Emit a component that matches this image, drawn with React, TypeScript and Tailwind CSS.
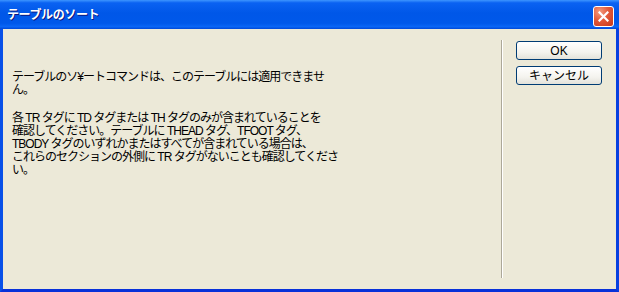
import React from 'react';

const bodyFont = "font-['Liberation_Sans','Noto_Sans_CJK_JP',sans-serif]";

const XpButton = ({ label }: { label: string }) => (
  <button
    type="button"
    className={`h-[19px] w-[86px] rounded-[3px] border border-[#003C74] bg-[linear-gradient(180deg,#FFFFFF_0%,#F4F3EE_60%,#E3E2DA_100%)] text-[12px] leading-none text-black ${bodyFont}`}
  >
    {label}
  </button>
);

const CloseButton = () => (
  <div className="mt-[6px] flex h-[21px] w-[21px] items-center justify-center rounded-[3px] border border-white bg-[radial-gradient(circle_at_30%_25%,#F39B7E_0%,#E2593A_45%,#C7381A_100%)]">
    <svg width="11" height="11" viewBox="0 0 11 11">
      <path d="M1.5 1.5 L9.5 9.5 M9.5 1.5 L1.5 9.5" stroke="#ffffff" strokeWidth="2.2" strokeLinecap="square" />
    </svg>
  </div>
);

export default function App() {
  return (
    <div className="flex h-[292px] w-[619px] flex-col bg-[#0831D9]">
      <div className="flex h-[29px] items-start justify-between bg-[linear-gradient(180deg,#3D95FF_0%,#0A62F2_10%,#0057E8_45%,#0058EA_80%,#0A66F6_92%,#0048D8_100%)] pr-[5px] pl-[7px]">
        <span className="mt-[7px] text-[12px] leading-[14px] font-bold tracking-[-0.4px] text-white [text-shadow:1px_1px_0_#0A1883] font-['Noto_Sans_CJK_JP',sans-serif]">
          テーブルのソート
        </span>
        <CloseButton />
      </div>

      <div className="flex flex-1 border-r-[3px] border-b-[3px] border-l-[3px] border-r-[#0840E0] border-b-[#0831D9] border-l-[#0850E8]">
        <div className="flex flex-1 bg-[#ECE9D8] py-[11px]">
          <div className={`w-[498px] pt-[31px] pl-[9px] text-[12px] leading-[13px] tracking-[-1px] whitespace-nowrap text-black ${bodyFont}`}>
            <p>
              テーブルのソ¥ートコマンドは、このテーブルには適用できませ
              <br />
              ん。
            </p>
            <p className="mt-[15px]">
              各 TR タグに TD タグまたは TH タグのみが含まれていることを
              <br />
              確認してください。テーブルに THEAD タグ、TFOOT タグ、
              <br />
              TBODY タグのいずれかまたはすべてが含まれている場合は、
              <br />
              これらのセクションの外側に TR タグがないことも確認してくださ
              <br />
              い。
            </p>
          </div>

          <div className="w-[2px] self-stretch border-r border-l border-r-white border-l-[#ACA899]" />

          <div className="ml-[13px] flex flex-col gap-[6px] pt-[1px]">
            <XpButton label="OK" />
            <XpButton label="キャンセル" />
          </div>
        </div>
      </div>
    </div>
  );
}
